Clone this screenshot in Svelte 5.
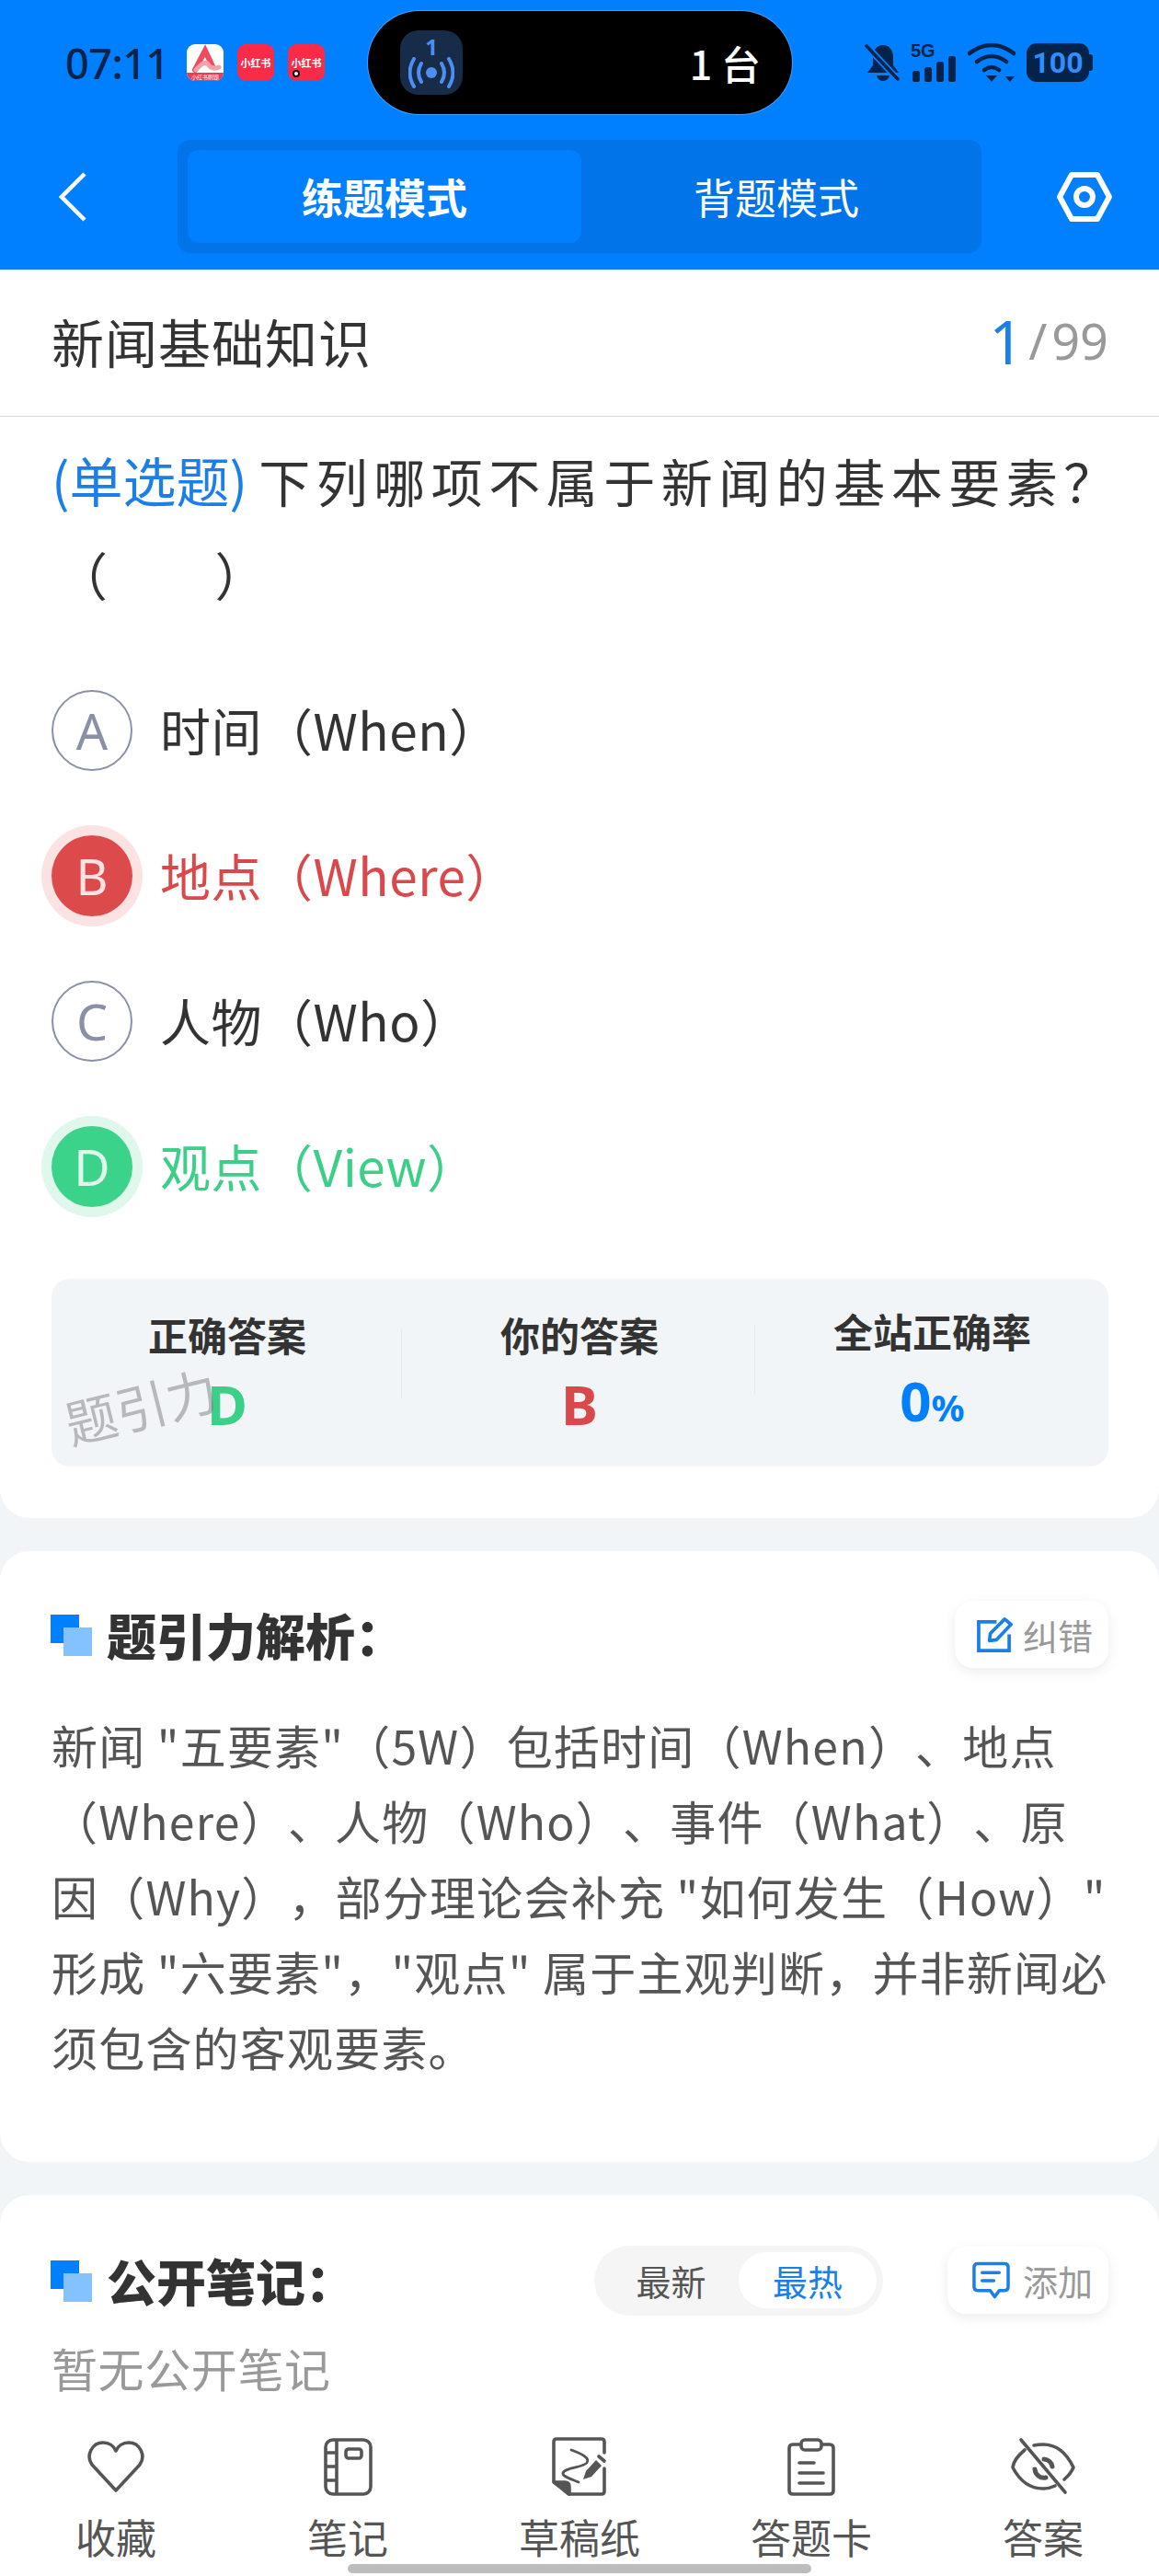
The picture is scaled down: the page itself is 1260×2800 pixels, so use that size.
<script>
  const options = [
    { key: 'A', text: '时间（When）', state: '' },
    { key: 'B', text: '地点（Where）', state: 'wrong' },
    { key: 'C', text: '人物（Who）', state: '' },
    { key: 'D', text: '观点（View）', state: 'right' }
  ];
  const analysis = '新闻 "五要素"（5W）包括时间（When）、地点（Where）、人物（Who）、事件（What）、原因（Why），部分理论会补充 "如何发生（How）" 形成 "六要素"，"观点" 属于主观判断，并非新闻必须包含的客观要素。';
</script>

<div class="page">
  <header class="top">
    <div class="status">
      <span class="time">07:11</span>
      <div class="apps">
        <span class="app app-a">
          <svg viewBox="0 0 40 40" width="40" height="40" fill="none" stroke-linecap="round">
            <path d="M9 28 L20 7 L28 24" stroke="#ef4b60" stroke-width="6" />
            <path d="M10 28 Q20 16 24 23 Q28 28 35 25" stroke="#f7a0a6" stroke-width="5" />
          </svg>
          <i>小红书刷题</i>
        </span>
        <span class="app">小红书</span>
        <span class="app">小红书<b></b></span>
      </div>
      <div class="island">
        <span class="island-icon">
          <em>1</em>
          <svg viewBox="0 0 50 34" width="50" height="34" fill="none" stroke="#4d8ef0" stroke-width="4" stroke-linecap="round">
            <circle cx="25" cy="17" r="6" fill="#4d8ef0" stroke="none" />
            <path d="M14 7 Q8 17 14 27 M36 7 Q42 17 36 27 M6 2 Q-3 17 6 32 M44 2 Q53 17 44 32" />
          </svg>
        </span>
        <span class="island-text">1 台</span>
      </div>
      <div class="indicators">
        <svg viewBox="0 0 38 42" width="38" height="42" fill="#03234a">
          <path d="M20 2 C27 2 31 8 31 15 L31 24 L37 32 L3 32 L9 24 L9 15 C9 8 13 2 20 2 Z M13 35 H27 Q25 41 20 41 Q15 41 13 35 Z" />
          <path d="M2 3 L36 39" stroke="#007fff" stroke-width="7" />
          <path d="M2 3 L36 39" stroke="#03234a" stroke-width="3.5" stroke-linecap="round" />
        </svg>
        <span class="signal">
          <small>5G</small>
          <svg viewBox="0 0 48 28" width="48" height="28" fill="#03234a">
            <rect x="0" y="16" width="8" height="12" rx="2.5" />
            <rect x="13" y="12" width="8" height="16" rx="2.5" />
            <rect x="26" y="6" width="8" height="22" rx="2.5" />
            <rect x="39" y="0" width="8" height="28" rx="2.5" />
          </svg>
        </span>
        <svg viewBox="0 0 52 42" width="52" height="42" fill="none" stroke="#03234a" stroke-width="4.6" stroke-linecap="round">
          <path d="M2 11 Q26 -7 50 11" />
          <path d="M10 20 Q26 8 42 20" />
          <path d="M18 29 Q26 23 34 29" />
          <path d="M20 35 H32 L26 42 Z M41 36 H51 L46 42 Z" fill="#03234a" stroke="none" />
        </svg>
        <span class="battery"><span>100</span></span>
      </div>
    </div>
    <nav class="nav">
      <svg class="back" viewBox="0 0 30 54" width="30" height="54" fill="none" stroke="#fff" stroke-width="4.5">
        <path d="M28 2 L3 27 L28 52" />
      </svg>
      <div class="modes">
        <span class="mode active">练题模式</span>
        <span class="mode">背题模式</span>
      </div>
      <svg class="gear" viewBox="0 0 62 56" width="62" height="56" fill="none" stroke="#fff" stroke-width="6" stroke-linejoin="round">
        <path d="M17 4 H45 L58 28 L45 52 H17 L4 28 Z" />
        <circle cx="31" cy="28" r="9" />
      </svg>
    </nav>
  </header>

  <main class="content">
    <section class="card first">
      <div class="title-row">
        <h1>新闻基础知识</h1>
        <span class="count"><b>1</b><i>/</i>99</span>
      </div>
      <div class="question">
        <p><span class="type">(单选题)</span> 下列哪项不属于新闻的基本要素？<span class="paren">（</span><span class="blank"></span>）</p>
      </div>
      <ul class="options">
        {#each options as o}
          <li class={o.state}>
            <span class="letter">{o.key}</span>
            <span class="option-text">{o.text}</span>
          </li>
        {/each}
      </ul>
      <div class="result">
        <div class="cell">
          <strong>正确答案</strong>
          <span class="value green">D</span>
          <span class="watermark">题引力</span>
        </div>
        <div class="cell">
          <strong>你的答案</strong>
          <span class="value red">B</span>
        </div>
        <div class="cell">
          <strong>全站正确率</strong>
          <span class="value blue">0<small>%</small></span>
        </div>
      </div>
    </section>

    <section class="card analysis">
      <div class="section-head">
        <span class="mark"></span>
        <h2>题引力解析：</h2>
        <span class="chip">
          <svg viewBox="0 0 40 40" width="39" height="39" fill="none" stroke="#1a7fe8" stroke-width="3.8">
            <path d="M22 6 H2 V38 H36 V20" />
            <path d="M14 27 L15 19 L31 3 L38 9 L22 26 Z" stroke-linejoin="round" />
          </svg>
          纠错
        </span>
      </div>
      <p class="body">{analysis}</p>
    </section>

    <section class="card notes">
      <div class="section-head">
        <span class="mark"></span>
        <h2>公开笔记：</h2>
        <div class="sort">
          <span>最新</span>
          <span class="on">最热</span>
        </div>
        <span class="chip add">
          <svg viewBox="0 0 42 42" width="42" height="42" fill="none" stroke="#1a7fe8" stroke-width="3.6" stroke-linecap="round" stroke-linejoin="round">
            <path d="M6 2 H36 Q40 2 40 6 V28 Q40 32 36 32 H30 L25 39 L20 32 H6 Q2 32 2 28 V6 Q2 2 6 2 Z" />
            <path d="M11 12 H30 M11 21 H24" />
          </svg>
          添加
        </span>
      </div>
      <p class="empty">暂无公开笔记</p>
    </section>
  </main>

  <footer class="tabs">
    <div class="tab">
      <svg viewBox="0 0 64 64" width="64" height="64" fill="none" stroke="#555" stroke-width="3.6" stroke-linejoin="round">
        <path d="M32 58 L6 30 C-1 20 6 6 18 6 C25 6 30 10 32 15 C34 10 39 6 46 6 C58 6 65 20 58 30 Z" />
      </svg>
      <span>收藏</span>
    </div>
    <div class="tab">
      <svg viewBox="0 0 64 64" width="64" height="64" fill="none" stroke="#555" stroke-width="3.6" stroke-linejoin="round">
        <rect x="8" y="3" width="49" height="59" rx="8" />
        <path d="M20 3 V62 M8 17 H20 M8 32 H20 M8 47 H20" />
        <rect x="30" y="13" width="17" height="10" rx="3" />
      </svg>
      <span>笔记</span>
    </div>
    <div class="tab">
      <svg viewBox="0 0 64 64" width="64" height="64" fill="none" stroke="#555" stroke-width="3.6" stroke-linejoin="round" stroke-linecap="round">
        <path d="M59 17 V5 Q59 2 56 2 H7 Q4 2 4 5 V48 L20 62 H56 Q59 62 59 59 V34" />
        <path d="M4 49 H16 Q21 49 21 54 V62 Z" fill="#555" />
        <path d="M23 14 C33 18 44 22 40 28 C36 33 16 33 14 39 C13 43 24 46 31 49" stroke-width="2.8" />
        <path d="M36 46 L39 37 L50 25 L56 31 L45 43 Z" fill="#555" stroke="none" />
        <path d="M53 21 L59 26" />
      </svg>
      <span>草稿纸</span>
    </div>
    <div class="tab">
      <svg viewBox="0 0 64 64" width="64" height="64" fill="none" stroke="#555" stroke-width="3.6" stroke-linejoin="round" stroke-linecap="round">
        <path d="M19 8 H12 Q8 8 8 12 V58 Q8 62 12 62 H52 Q56 62 56 58 V12 Q56 8 52 8 H45" />
        <rect x="21" y="3" width="22" height="11" rx="4" />
        <path d="M19 28 H35 M19 39 H45 M19 50 H45" />
      </svg>
      <span>答题卡</span>
    </div>
    <div class="tab">
      <svg viewBox="0 0 70 64" width="70" height="64" fill="none" stroke="#555" stroke-width="3.6" stroke-linejoin="round" stroke-linecap="round">
        <path d="M15 14 Q3 24 2 33 Q14 56 35 56 Q42 56 48 53 M25 9 Q30 8 35 8 Q56 8 68 33 Q65 40 58 46" />
        <path d="M26 35 A10 10 0 0 0 38 44 M36 24 A10 10 0 0 1 45 32" stroke-width="5" />
        <path d="M11 3 L59 60" />
      </svg>
      <span>答案</span>
    </div>
    <div class="home-bar"></div>
  </footer>
</div>

<style>
  :global(body) {
    margin: 0;
    background: #f2f5f8;
  }

  .page {
    width: 1260px;
    height: 2800px;
    display: flex;
    flex-direction: column;
    overflow: hidden;
    font-family: "Noto Sans CJK SC", "Noto Sans", sans-serif;
    color: #333;
    text-spacing-trim: space-all;
  }

  .top {
    height: 293px;
    flex: none;
    background: #007fff;
    box-sizing: border-box;
  }

  .status {
    height: 152px;
    box-sizing: border-box;
    padding: 12px 0 28px 71px;
    display: flex;
    align-items: center;
  }

  .time {
    width: 132px;
    font-size: 45px;
    font-weight: 500;
    color: #03234a;
    font-family: "Noto Sans", sans-serif;
    letter-spacing: -0.5px;
  }

  .apps {
    width: 197px;
    display: flex;
    gap: 15px;
  }

  .app {
    position: relative;
    width: 40px;
    height: 40px;
    border-radius: 9px;
    background: #fb2b48;
    color: #fff;
    font-size: 11px;
    font-weight: 700;
    line-height: 40px;
    text-align: center;
    white-space: nowrap;
    overflow: hidden;
  }

  .app-a {
    background: #fff;
  }

  .app-a svg {
    position: absolute;
    left: 0;
    top: 0;
  }

  .app-a i {
    position: absolute;
    left: 0;
    right: 0;
    bottom: 0;
    height: 9px;
    background: #ee3b52;
    font-size: 6px;
    line-height: 9px;
    font-style: normal;
    font-weight: 400;
  }

  .app b {
    position: absolute;
    left: 5px;
    bottom: 4px;
    width: 4px;
    height: 4px;
    border: 2px solid #111;
    border-radius: 50%;
    background: #fff;
  }

  .island {
    width: 461px;
    height: 112px;
    flex: none;
    box-sizing: border-box;
    border-radius: 56px;
    background: #000;
    box-shadow: 0 0 0 1px rgba(255, 255, 255, 0.25);
    padding: 0 34px 0 35px;
    display: flex;
    align-items: center;
    justify-content: space-between;
  }

  .island-icon {
    width: 68px;
    height: 70px;
    border-radius: 20px;
    background: #172c49;
    color: #4d8ef0;
    display: flex;
    flex-direction: column;
    align-items: center;
    font-size: 24px;
    font-weight: 700;
    line-height: 26px;
    font-family: "Noto Sans", sans-serif;
  }

  .island-icon em {
    font-style: normal;
    height: 24px;
    margin-top: 5px;
  }

  .island-text {
    color: #fff;
    font-size: 43px;
    font-weight: 500;
  }

  .indicators {
    margin-left: 79px;
    display: flex;
    align-items: center;
    gap: 12px;
  }

  .signal {
    position: relative;
    width: 50px;
    height: 42px;
    display: flex;
    align-items: flex-end;
    padding-left: 2px;
    box-sizing: border-box;
  }

  .signal small {
    position: absolute;
    left: 0;
    top: -2px;
    font-size: 20px;
    font-weight: 700;
    line-height: 20px;
    color: #03234a;
    font-family: "Liberation Sans", sans-serif;
  }

  .battery {
    position: relative;
    width: 68px;
    height: 42px;
    border-radius: 11px;
    background: #03234a;
    color: #2f8fff;
    font-size: 32px;
    font-weight: 700;
    font-family: "Roboto", sans-serif;
    line-height: 42px;
    text-align: center;
  }

  .battery::after {
    content: "";
    position: absolute;
    right: -4px;
    top: 12px;
    width: 4px;
    height: 18px;
    border-radius: 0 3px 3px 0;
    background: #03234a;
  }

  .nav {
    height: 123px;
    padding: 0 50px 0 64px;
    display: flex;
    align-items: center;
  }

  .modes {
    width: 875px;
    height: 123px;
    box-sizing: border-box;
    padding: 11px;
    margin: 0 81px 0 99px;
    background: #0074e8;
    border-radius: 14px;
    display: flex;
  }

  .mode {
    flex: 1;
    display: flex;
    align-items: center;
    justify-content: center;
    color: #fff;
    font-size: 45px;
    border-radius: 12px;
  }

  .mode.active {
    flex: none;
    width: 428px;
    background: #007fff;
    font-weight: 700;
  }

  .content {
    flex: 1;
    min-height: 0;
    display: flex;
    flex-direction: column;
    gap: 36px;
  }

  .card {
    flex: none;
    background: #fff;
    border-radius: 32px;
  }

  .first {
    border-radius: 0 0 32px 32px;
    height: 1357px;
  }

  .title-row {
    height: 160px;
    box-sizing: border-box;
    padding: 0 55px 5px 56px;
    border-bottom: 1px solid #d8d8d8;
    display: flex;
    align-items: center;
    justify-content: space-between;
  }

  h1 {
    margin: 0;
    font-size: 57px;
    font-weight: 400;
    letter-spacing: 1px;
  }

  .count {
    display: flex;
    align-items: center;
    font-size: 54px;
    color: #999;
    font-family: "Noto Sans", sans-serif;
  }

  .count b {
    color: #1a7fe8;
    font-weight: 400;
    font-size: 66px;
  }

  .count i {
    font-style: normal;
    margin: 0 5px;
  }

  .question {
    padding: 17px 26px 0 56px;
  }

  .question p {
    margin: 0;
    font-size: 56px;
    line-height: 102px;
    letter-spacing: 6.5px;
    word-spacing: -7px;
  }

  .type {
    color: #1a7fe8;
    font-size: 58px;
    letter-spacing: 0;
  }

  .paren {
    margin-left: 5px;
  }

  .blank {
    display: inline-block;
    width: 110px;
  }

  .options {
    list-style: none;
    margin: 40px 0 0;
    padding: 0 56px;
  }

  .options li {
    height: 158px;
    display: flex;
    align-items: center;
    gap: 30px;
    font-size: 55px;
  }

  .option-text {
    padding-bottom: 5px;
    letter-spacing: 0.5px;
  }

  .letter {
    width: 88px;
    height: 88px;
    box-sizing: border-box;
    border: 2.5px solid #8a90a6;
    border-radius: 50%;
    color: #8a90a6;
    display: flex;
    align-items: center;
    justify-content: center;
    font-family: "Noto Sans", sans-serif;
    font-size: 54px;
  }

  .wrong {
    color: #d9484b;
  }

  .right {
    color: #3ccf88;
  }

  .wrong .letter {
    background: #dc4a4c;
    border: none;
    color: #fbe3e3;
    box-shadow: 0 0 0 11px #fbe3e3;
  }

  .right .letter {
    background: #3bd389;
    border: none;
    color: #e0f8ec;
    box-shadow: 0 0 0 11px #e0f8ec;
  }

  .result {
    margin: 43px 55px 0 56px;
    height: 204px;
    background: #f2f5f8;
    border-radius: 20px;
    display: grid;
    grid-template-columns: 382px 384px 383px;
    align-items: center;
  }

  .cell {
    position: relative;
    display: flex;
    flex-direction: column;
    align-items: center;
    gap: 16px;
    padding-bottom: 5px;
  }

  .cell + .cell::before {
    content: "";
    position: absolute;
    left: -2px;
    top: 22px;
    height: 76px;
    width: 1px;
    background: #e6e9ed;
  }

  .cell strong {
    font-size: 43px;
    line-height: 56px;
    font-weight: 700;
  }

  .value {
    font-size: 60px;
    line-height: 64px;
    font-weight: 700;
    font-family: "Noto Sans", sans-serif;
  }

  .value small {
    font-size: 40px;
  }

  .green {
    color: #3ccf88;
  }

  .red {
    color: #d9484b;
  }

  .blue {
    color: #007fff;
  }

  .watermark {
    position: absolute;
    left: 13px;
    top: 70px;
    font-size: 56px;
    line-height: 70px;
    color: rgba(110, 110, 110, 0.45);
    transform: rotate(-14deg);
    white-space: nowrap;
  }

  .section-head {
    position: relative;
    display: flex;
    align-items: center;
    padding: 0 55px 0 116px;
    height: 73px;
  }

  .mark {
    position: absolute;
    left: 55px;
    top: 15px;
    width: 31px;
    height: 31px;
    background: #007fff;
    z-index: 1;
  }

  .mark::after {
    content: "";
    position: absolute;
    left: 14px;
    top: 14px;
    width: 31px;
    height: 31px;
    background: #84c1ff;
    z-index: -1;
  }

  h2 {
    margin: 0 auto 0 0;
    font-size: 54px;
    font-weight: 900;
    line-height: 72px;
  }

  .chip {
    display: flex;
    align-items: center;
    gap: 11px;
    box-sizing: border-box;
    height: 73px;
    padding: 0 17px 0 24px;
    background: #fff;
    border-radius: 20px;
    box-shadow: 0 4px 14px rgba(0, 0, 0, 0.08);
    color: #999;
    font-size: 38px;
    white-space: nowrap;
  }

  .analysis {
    padding-top: 54px;
    height: 664px;
    box-sizing: border-box;
  }

  .body {
    margin: 42px 52px 0 56px;
    font-size: 50px;
    line-height: 82px;
    color: #555;
    letter-spacing: 1.2px;
  }

  .notes {
    padding-top: 56px;
    flex: 1;
    border-radius: 32px 32px 0 0;
  }

  .sort {
    display: flex;
    align-items: center;
    box-sizing: border-box;
    height: 76px;
    width: 314px;
    padding: 7px;
    margin-right: 70px;
    border-radius: 38px;
    background: #f5f5f5;
    font-size: 38px;
    color: #555;
  }

  .sort span {
    flex: 1;
    text-align: center;
    line-height: 61px;
    border-radius: 31px;
    padding-left: 3px;
  }

  .sort .on {
    flex: none;
    width: 150px;
    padding-left: 0;
    background: #fff;
    color: #1a7fe8;
  }

  .add {
    width: 175px;
    padding: 0 17px 0 27px;
    gap: 14px;
  }

  .empty {
    margin: 23px 56px 0;
    font-size: 50px;
    line-height: 70px;
    color: #999;
    letter-spacing: 0.6px;
  }

  .tabs {
    position: relative;
    flex: none;
    height: 196px;
    box-sizing: border-box;
    background: #fff;
    padding-top: 45px;
    display: grid;
    grid-template-columns: repeat(5, 1fr);
    color: #555;
    font-size: 44px;
  }

  .tab {
    display: flex;
    flex-direction: column;
    align-items: center;
    gap: 14px;
  }

  .tab svg {
    height: 64px;
  }

  .tab span {
    line-height: 60px;
  }

  .home-bar {
    position: absolute;
    left: 378px;
    bottom: 3px;
    width: 504px;
    height: 10px;
    border-radius: 5px;
    background: #bdbdbd;
  }
</style>
